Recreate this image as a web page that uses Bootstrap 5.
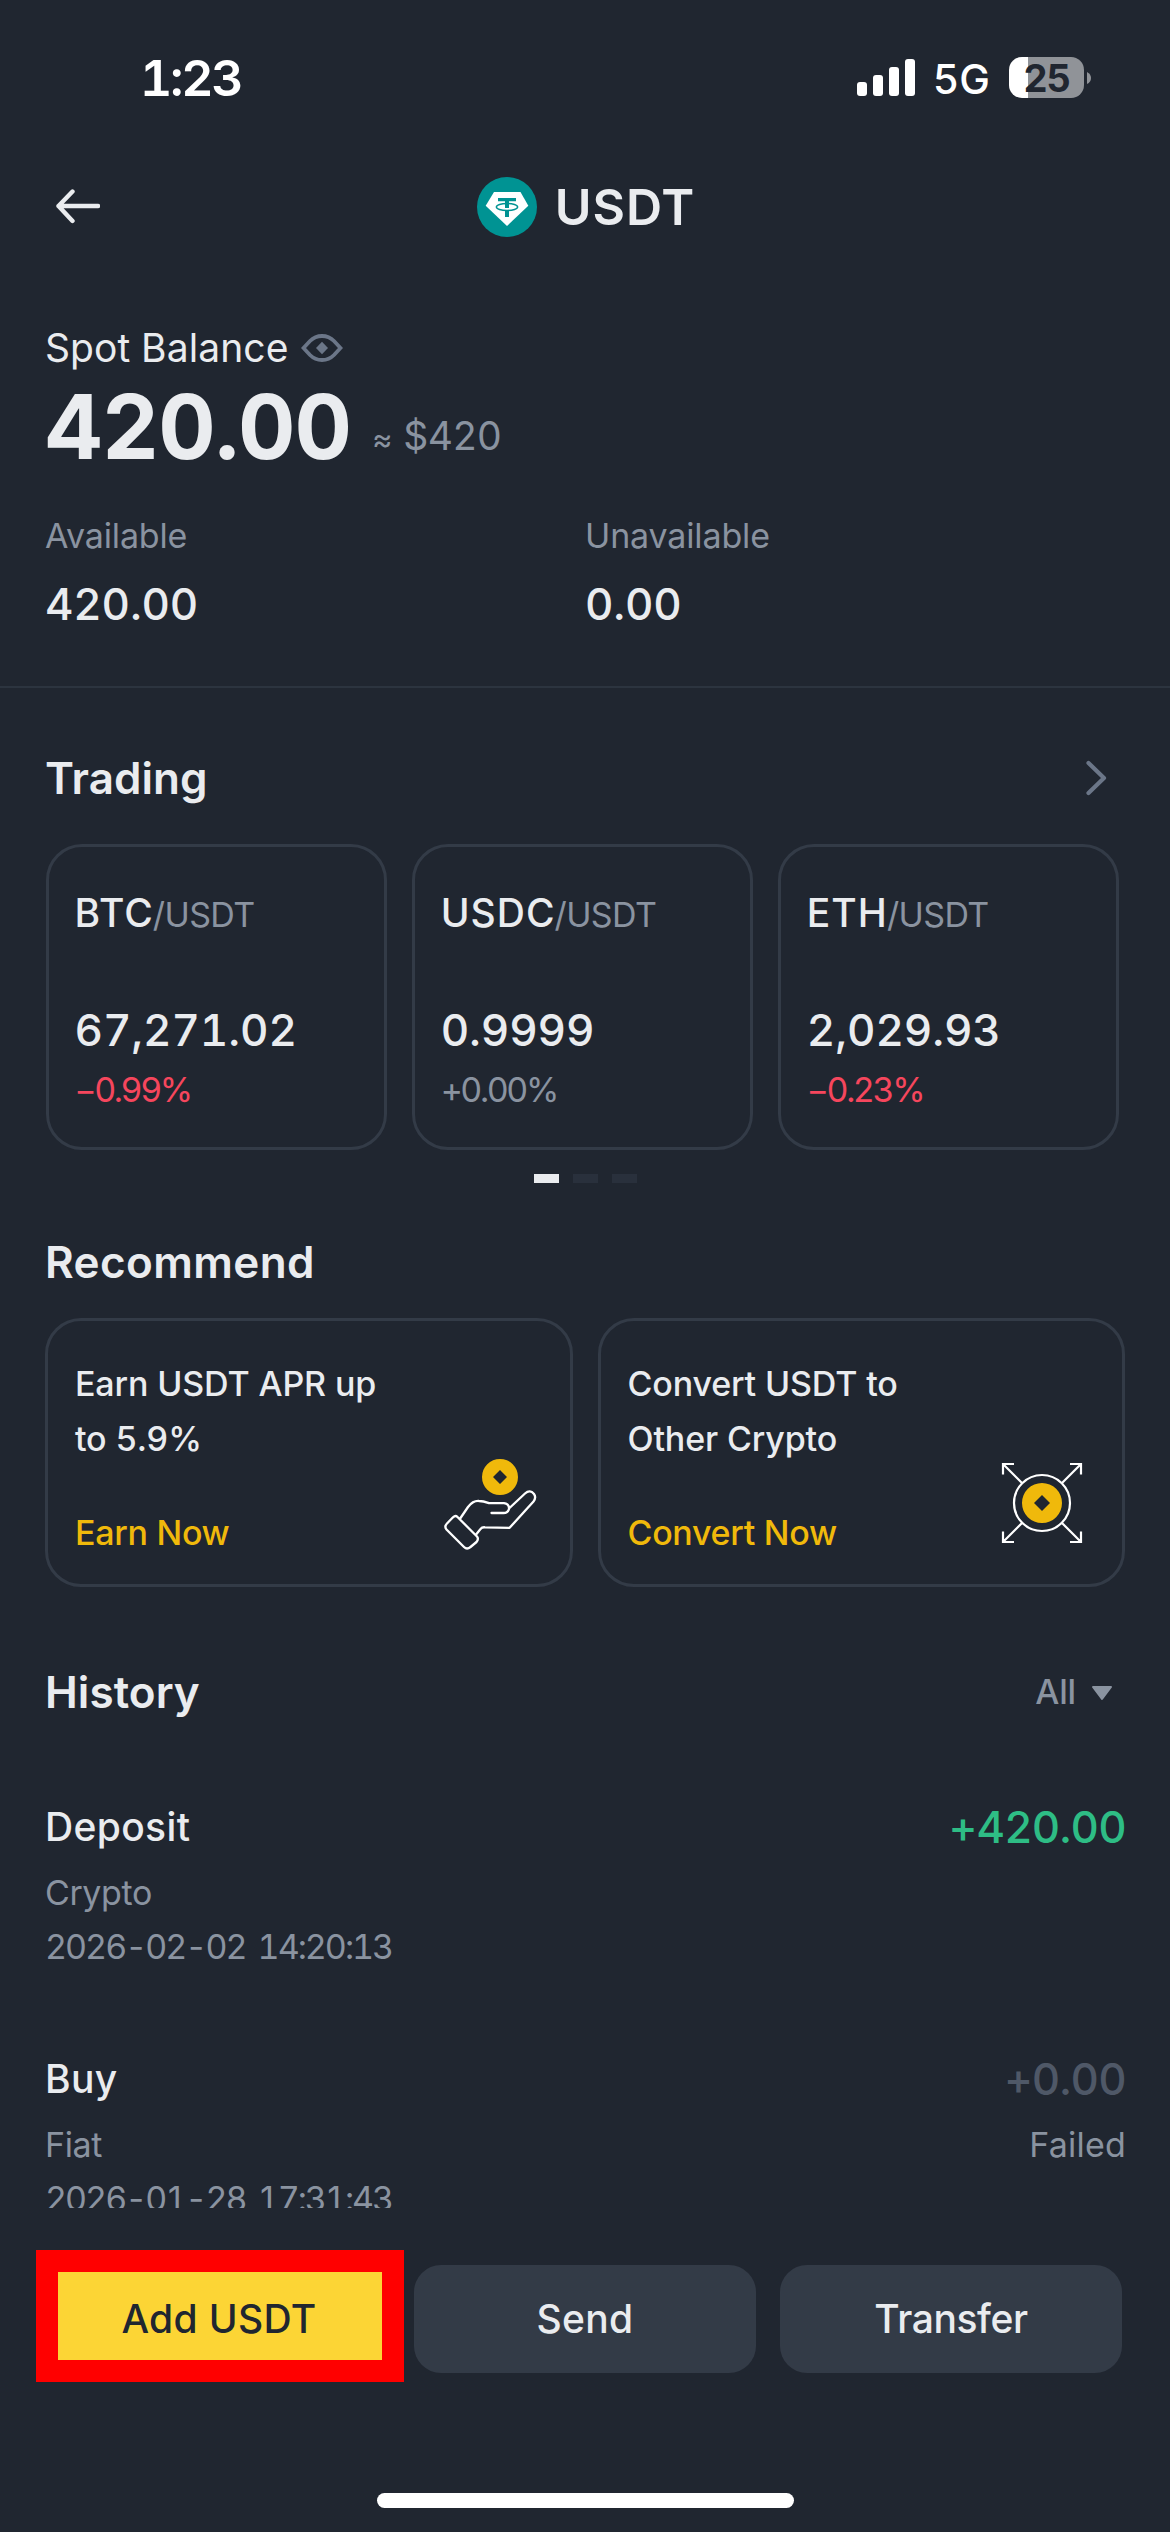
<!DOCTYPE html>
<html lang="en">
<head>
<meta charset="utf-8">
<meta name="viewport" content="width=device-width, initial-scale=1">
<title>USDT</title>
<link href="https://cdn.jsdelivr.net/npm/bootstrap@5.3.0/dist/css/bootstrap.min.css" rel="stylesheet">
<style>
:root{--bg:#202630;--line:#333b47;--text:#eaecef;--muted:#8a93a0;--gold:#f0b90b}
body{background:var(--bg);color:var(--text);font-family:Inter,"Liberation Sans",sans-serif;font-variant-numeric:tabular-nums;width:1170px;height:2532px;overflow:hidden}
svg{display:block;flex:none}
.muted{color:var(--muted)}
.gold{color:var(--gold)}
.down{color:#f6465d}
.up{color:#2ebd85}
.faint{color:#4f5867}
.statusbar{height:155px;padding:0 79px 0 140px;color:#fff}
.clock{font-size:50px;font-weight:600;letter-spacing:-2.3px;line-height:60px}
.net{font-size:41px;font-weight:500;line-height:50px;margin:3px 19px 0 18px}
.battery{width:75px;height:41px;border-radius:13px;background:linear-gradient(90deg,#fff 19px,#909398 19px);color:var(--bg);font-size:38px;font-weight:700;letter-spacing:-1.3px;line-height:42px}
.nub{margin-left:3px}
.topbar{height:104px;padding-left:56px}
.topbar .side{flex:1 1 0}
.topbar .side-end{margin-right:54px}
.coin-name{font-size:50px;font-weight:600;letter-spacing:.9px;line-height:60px;margin-left:18px}
.page{height:1949px;overflow:hidden;padding:64px 46px 0 44px}
.t39{font-size:39px;line-height:50px;letter-spacing:.1px;margin-left:1px}
.eye{margin-left:12px}
.balance{font-size:89px;font-weight:700;letter-spacing:-.9px;line-height:108px;margin-left:1px}
.approx{font-size:39px;line-height:50px;letter-spacing:-.7px;padding-top:20px;margin-left:21px}
.approx span{font-size:31px;margin-right:2px}
.amounts{margin:33px -1px 0 1px}
.t34{font-size:34px;line-height:44px;letter-spacing:-.15px}
.t44{font-size:44px;font-weight:550;line-height:56px;letter-spacing:-.2px;margin-top:18px}
.heading{font-size:44px;font-weight:600;line-height:60px;letter-spacing:.05px;margin:0 0 0 1px}
.heading-wide{letter-spacing:.4px}
.rule{height:2px;background:#2c343f;margin:54px -46px 60px -44px}
.chev{margin-right:17px}
.tile{border:3px solid var(--line);border-radius:36px}
.pairs{margin:36px 5px 0 1.5px;gap:25px}
.pairs .tile{flex:1 1 0;height:306px;padding:41px 0 0 26px}
.pair{font-size:39px;font-weight:500;line-height:50px;letter-spacing:1px}
.pair span{font-size:34px;font-weight:400;line-height:1;letter-spacing:-.6px;margin-left:-1px}
.price{font-size:44px;font-weight:500;line-height:54px;letter-spacing:-.1px;margin-top:65px}
.pct{font-size:34px;line-height:44px;letter-spacing:-2.4px;margin-top:11px}
.pager{gap:14px;margin:24px -2px 49px 0}
.pager i{width:25px;height:9px;background:#29303c}
.pager i.on{background:var(--text)}
.offers{margin:26px -1px 75px 1px;gap:25px}
.offers .tile{flex:1 1 0;height:269px;padding:36px 29px 33px 27px}
.offer-text{font-size:34px;font-weight:500;line-height:54.5px;letter-spacing:-.15px}
.offer-link{font-size:34px;font-weight:500;line-height:44px;letter-spacing:-.3px;margin-top:45px}
.filter{margin-right:11px}
.caret{margin:3px 0 0 15px}
.entry{margin-top:78px}
.entry .kind{font-size:39px;font-weight:500;line-height:54px;letter-spacing:.35px;margin:0 0 12px 1px}
.entry .amount{font-size:44px;font-weight:550;line-height:54px;letter-spacing:-.8px;margin-bottom:12px}
.entry .sub{font-size:34px;line-height:54px;letter-spacing:-.4px;margin-left:1px}
.entry .failed{letter-spacing:.2px}
.entry .stamp{letter-spacing:-2px;word-spacing:5px}
.entry .text-end{margin-right:-2px}
.actions{padding:42px 48px 0 36px}
.actions .btn{font-size:39px;font-weight:500;letter-spacing:.35px;line-height:50px}
.btn-add,.btn-add:hover{width:368px;height:132px;border:22px solid #f00;border-radius:0;background:#fcd535;color:var(--bg);padding:6px 2px 0 0}
.btn-alt,.btn-alt:hover{width:342px;height:108px;border:0;border-radius:27px;background:var(--line);color:var(--text);margin-top:15px}
.actions .btn-transfer{letter-spacing:-.4px}
.home{width:417px;height:15px;border-radius:8px;background:#fff;margin:111px 0 0 377px}
</style>
</head>
<body>
<div class="statusbar d-flex align-items-center">
  <div class="clock me-auto">1:23</div>
  <svg width="58" height="37" viewBox="0 0 58 37" fill="#fff"><rect y="23" width="10" height="14" rx="3"/><rect x="16" y="16" width="10" height="21" rx="3"/><rect x="32" y="8" width="10" height="29" rx="3"/><rect x="48" width="10" height="37" rx="3"/></svg>
  <div class="net">5G</div>
  <div class="battery text-center">25</div>
  <svg class="nub" width="4" height="12" viewBox="0 0 4 12"><path d="M0 0Q4 2 4 6T0 12Z" fill="#909398"/></svg>
</div>

<header class="topbar d-flex align-items-center">
  <div class="side"><svg width="44" height="36" viewBox="0 0 44 36" fill="none" stroke="#eaecef" stroke-width="4.4" stroke-linecap="round" stroke-linejoin="round"><path d="M42 17H2.5M16.5 2.5L2.5 17l14 15"/></svg></div>
  <div class="d-flex align-items-center">
    <svg width="60" height="60" viewBox="0 0 60 60"><circle cx="30" cy="30" r="30" fill="#009393"/><path d="M17 15H43.5L51.3 28.7 30 49 8.7 28.7Z" fill="#fff"/><path d="M21 21H39V24.3H32V31H28V24.3H21ZM28 34H32V40H28Z" fill="#009393"/><ellipse cx="30" cy="30" rx="10.6" ry="3.5" fill="none" stroke="#009393" stroke-width="1.5"/></svg>
    <div class="coin-name">USDT</div>
  </div>
  <div class="side side-end"></div>
</header>

<main class="page">
  <div class="d-flex align-items-center">
    <div class="t39">Spot Balance</div>
    <svg class="eye" width="42" height="28" viewBox="0 0 42 28"><path d="M2.5 14L9 7Q14 2 21 2T33 7L39.5 14 33 21Q28 26 21 26T9 21Z" fill="none" stroke="#6b7688" stroke-width="3.8"/><path d="M21 7.800L27 14 21 20.200 15 14Z" fill="#6b7688"/></svg>
  </div>
  <div class="d-flex align-items-center">
    <div class="balance">420.00</div>
    <div class="approx muted"><span>≈</span> $420</div>
  </div>
  <div class="row g-0 amounts">
    <div class="col-6"><div class="t34 muted">Available</div><div class="t44">420.00</div></div>
    <div class="col-6"><div class="t34 muted">Unavailable</div><div class="t44">0.00</div></div>
  </div>
  <div class="rule"></div>

  <div class="d-flex align-items-center justify-content-between">
    <h2 class="heading">Trading</h2>
    <svg class="chev" width="22" height="36" viewBox="0 0 22 36" fill="none" stroke="#6b7688" stroke-width="4.2" stroke-linecap="round" stroke-linejoin="round"><path d="M3.5 3L19 18 3.5 33"/></svg>
  </div>
  <div class="pairs d-flex">
    <div class="tile"><div class="pair">BTC<span class="muted">/USDT</span></div><div class="price">67,271.02</div><div class="pct down">−0.99%</div></div>
    <div class="tile"><div class="pair">USDC<span class="muted">/USDT</span></div><div class="price">0.9999</div><div class="pct muted">+0.00%</div></div>
    <div class="tile"><div class="pair">ETH<span class="muted">/USDT</span></div><div class="price">2,029.93</div><div class="pct down">−0.23%</div></div>
  </div>
  <div class="pager d-flex justify-content-center"><i class="on"></i><i></i><i></i></div>

  <h2 class="heading heading-wide">Recommend</h2>
  <div class="offers d-flex">
    <div class="tile d-flex justify-content-between align-items-end">
      <div class="align-self-start"><div class="offer-text">Earn USDT APR up<br>to 5.9%</div><div class="offer-link gold">Earn Now</div></div>
      <svg width="100" height="96" viewBox="0 0 100 96" fill="none" stroke="#fff" stroke-width="2.3" stroke-linecap="round" stroke-linejoin="round"><path d="M59 4a18 18 0 1 0 0 36 18 18 0 0 0 0-36Zm0 11 7 7-7 7-7-7Z" fill="#f0b90b" stroke="none"/><path d="M16.5 62L36 81.5Q38 84 35.5 87L29.500 92Q26 95 23 92L5.500 74.500Q3 71.500 6 68.500L12 62.300Q14.500 60 16.500 62ZM19.500 63L27 52Q32 45.500 38 46Q42 46 48 48.200H63Q68.500 49 68 54Q67 58 62.500 58H50.500M68 53.500L84 38.500Q89 34 93 39Q95.500 42.500 92.500 46.500L68.600 72.800 44 72.300Q41 72 39.500 74L35.500 79"/></svg>
    </div>
    <div class="tile d-flex justify-content-between align-items-end">
      <div class="align-self-start"><div class="offer-text">Convert USDT to<br>Other Crypto</div><div class="offer-link gold">Convert Now</div></div>
      <svg width="100" height="96" viewBox="0 0 100 96" fill="none" stroke="#fff" stroke-width="2.2"><circle cx="49" cy="48" r="28"/><path d="M10 19.500V9H21M77 9H88V19.500M10 76.500V87H21M77 87H88V76.500M10 9L29 28M88 9L69 28M10 87L29 68M88 87L69 68"/><path d="M49 28a20 20 0 1 0 0 40 20 20 0 0 0 0-40Zm0 12 8 8-8 8-8-8Z" fill="#f0b90b" stroke="none"/></svg>
    </div>
  </div>

  <div class="d-flex align-items-center justify-content-between">
    <h2 class="heading">History</h2>
    <div class="filter d-flex align-items-center"><span class="t34 muted fw-medium">All</span><svg class="caret" width="22" height="15" viewBox="0 0 22 15"><path d="M2 1H20L11 13Z" fill="#8a93a0" stroke="#8a93a0" stroke-width="2" stroke-linejoin="round"/></svg></div>
  </div>
  <div class="entry d-flex justify-content-between">
    <div><div class="kind">Deposit</div><div class="sub muted">Crypto</div><div class="sub stamp muted">2026-02-02 14:20:13</div></div>
    <div class="text-end"><div class="amount up">+420.00</div></div>
  </div>
  <div class="entry d-flex justify-content-between">
    <div><div class="kind">Buy</div><div class="sub muted">Fiat</div><div class="sub stamp muted">2026-01-28 17:31:43</div></div>
    <div class="text-end"><div class="amount faint">+0.00</div><div class="sub failed muted">Failed</div></div>
  </div>
</main>

<footer>
  <div class="actions d-flex justify-content-between align-items-start">
    <button class="btn btn-add">Add USDT</button>
    <div class="d-flex gap-4"><button class="btn btn-alt">Send</button><button class="btn btn-alt btn-transfer">Transfer</button></div>
  </div>
  <div class="home"></div>
</footer>
<script src="https://cdn.jsdelivr.net/npm/bootstrap@5.3.0/dist/js/bootstrap.bundle.min.js"></script>
</body>
</html>
